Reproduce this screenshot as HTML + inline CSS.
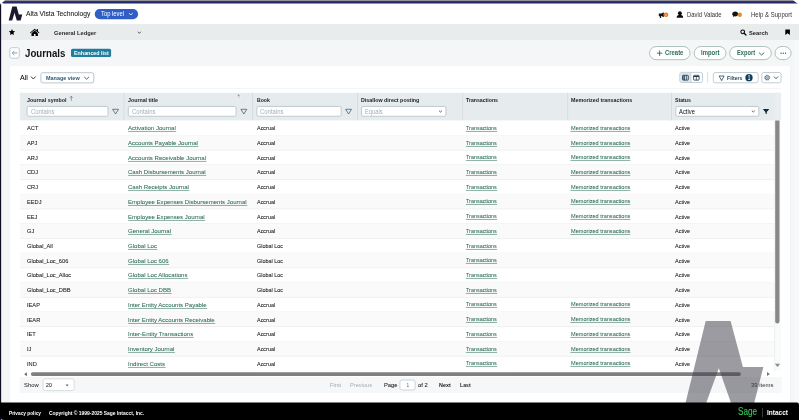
<!DOCTYPE html>
<html lang="en"><head><meta charset="utf-8"><title>Journals</title>
<style>
*{box-sizing:border-box;margin:0;padding:0}
html,body{width:799px;height:420px;overflow:hidden}
body{background:#fff;font-family:"Liberation Sans",sans-serif;color:#111;position:relative;font-size:6px}
#w{position:absolute;left:0;top:0;width:799px;height:420px;overflow:hidden;will-change:transform}
svg.layer{position:absolute;left:0;top:0}
.t{position:absolute;white-space:nowrap;line-height:1;transform-origin:0 0;display:block}
a.lnk{text-decoration:none;-webkit-text-stroke:0.05px #2a6b52}
.hv{-webkit-text-stroke:0.05px #111}
</style></head><body><div id="w">
<svg class="layer" width="799" height="420" viewBox="0 0 799 420">
<rect x="0" y="24" width="799" height="16.4" fill="#e9eced"/>
<rect x="1.15" y="40.4" width="793.35" height="362.1" fill="#f5f6f7"/>
<rect x="794.5" y="40.4" width="4.5" height="362" fill="#f8f9fa"/>
<defs><linearGradient id="tb" x1="0" y1="1.1" x2="0" y2="3.9" gradientUnits="userSpaceOnUse"><stop offset="0" stop-color="#15122c"/><stop offset="0.4" stop-color="#1a1f52"/><stop offset="0.72" stop-color="#2b4b9c"/><stop offset="1" stop-color="#2b4b9c" stop-opacity="0.15"/></linearGradient></defs>
<path d="M4.6 1.1H794L798 3.9H3.4L2.1 2.5Z" fill="url(#tb)"/>
<path d="M5.2 0H793L794.2 1.2H3.8Z" fill="#96939b"/>
<rect x="0" y="4.3" width="1.15" height="416" fill="#0f0e26"/>
<rect x="0" y="3.5" width="1.15" height="0.8" fill="#0f0e26" opacity="0.5"/>
<path d="M12.3 6.4H16.6L18.8 14.4H22.3L20.6 20.4H16.8L14.5 12.7L12.2 20.4H8.7Z" fill="#1c1b2b"/>
<rect x="94.7" y="9" width="43.4" height="10.2" rx="5.1" fill="#2f5fc6"/>
<path d="M129.3 13.4L130.8 15L132.3 13.4" fill="none" stroke="#fff" stroke-width="0.8" stroke-linecap="round" stroke-linejoin="round"/>
<path d="M658.8 13.4h2.4l2.6-1.2v5l-2.6-1.2h-0.3l0.4 1.9h-1.3l-0.5-1.9h-0.7z" fill="#141414"/><circle cx="666" cy="14.75" r="2.25" fill="#e2731f"/><rect x="665.55" y="13.4" width="0.8" height="2.7" rx="0.3" fill="#fde3c8"/>
<circle cx="679.9" cy="13.25" r="1.95" fill="#0c0c0c"/><path d="M676.75 17.8v-0.7c0-1.5 1.3-2 3.15-2s3.15 0.5 3.15 2v0.7z" fill="#0c0c0c"/>
<path d="M732.2 14c0-1.5 1.3-2.5 3-2.5s3 1 3 2.5-1.3 2.4-3 2.4c-0.3 0-0.6 0-0.9-0.1l-1.5 0.7 0.3-1.3c-0.6-0.4-0.9-1-0.9-1.7z" fill="#141414"/><circle cx="739.75" cy="14.75" r="2.2" fill="#e68a2b"/>
<g transform="translate(8.7,28.9) scale(0.27)"><path d="M12 0.5l3.5 7.5 8.2 1-6 5.7 1.5 8.1L12 18.8l-7.2 4 1.5-8.1-6-5.7 8.2-1z" fill="#000"/></g>
<g transform="translate(29.9,28.7) scale(0.48)"><path d="M10 0L0 8.2l1.2 1.5L10 2.6l8.8 7.1L20 8.2l-3.3-2.7V0.8h-2.4v2.7z" fill="#000"/><path d="M10 4L3.3 9.5V15h5v-4h3.4v4h5V9.5z" fill="#000"/></g>
<path d="M138.2 32L139.4 33.3L140.6 32" fill="none" stroke="#333" stroke-width="0.8" stroke-linecap="round" stroke-linejoin="round"/>
<g transform="translate(740.2,29.3) scale(0.5)"><circle cx="5" cy="5" r="3.7" fill="none" stroke="#000" stroke-width="2.1"/><path d="M7.8 7.8l3.8 3.6" stroke="#000" stroke-width="2.4" stroke-linecap="round"/></g>
<path d="M785.3 29.5h4.6v5.4l-2.3-1.6-2.3 1.6z" fill="#000"/>
<rect x="9.8" y="47.7" width="9.5" height="10.5" rx="2" fill="#fff" stroke="#b3bfc5" stroke-width="0.8"/>
<path d="M17.3 53H12.4M14.3 50.9L12.2 53l2.1 2.1" fill="none" stroke="#6b93ad" stroke-width="0.85"/>
<rect x="71" y="48.8" width="40.1" height="8.3" rx="1.6" fill="#1f7d9e"/>
<rect x="649.5" y="46.5" width="40.6" height="13.2" rx="7" fill="#fff" stroke="#9ab5a8" stroke-width="0.8"/>
<path d="M659.6 50.5v5.4M656.9 53.2h5.4" stroke="#2c6e52" stroke-width="0.9"/>
<rect x="694.2" y="46.5" width="31.8" height="13.2" rx="7" fill="#fff" stroke="#9ab5a8" stroke-width="0.8"/>
<rect x="729.7" y="46.5" width="41.6" height="13.2" rx="7" fill="#fff" stroke="#9ab5a8" stroke-width="0.8"/>
<path d="M759.3 52.9L761.6 55L763.9 52.9" fill="none" stroke="#2c6e52" stroke-width="0.95" stroke-linecap="round" stroke-linejoin="round"/>
<rect x="775" y="46.5" width="16.1" height="13.2" rx="7" fill="#fff" stroke="#9ab5a8" stroke-width="0.8"/>
<circle cx="781.1" cy="53.2" r="0.7" fill="#2c6e52"/>
<circle cx="783.3" cy="53.2" r="0.7" fill="#2c6e52"/>
<circle cx="785.5" cy="53.2" r="0.7" fill="#2c6e52"/>
<rect x="9.8" y="65.3" width="780.6" height="338" rx="3.5" fill="rgba(0,0,0,0.05)"/>
<rect x="10" y="65.5" width="780.2" height="338" rx="3" fill="#fff"/>
<path d="M31.2 76.8L33.3 79L35.4 76.8" fill="none" stroke="#222" stroke-width="0.9" stroke-linecap="round" stroke-linejoin="round"/>
<rect x="40.9" y="72.7" width="52.9" height="10.2" rx="2" fill="#fff" stroke="#a9b7be" stroke-width="0.8"/>
<path d="M84.5 77.2L86.6 79.2L88.7 77.2" fill="none" stroke="#333" stroke-width="0.8" stroke-linecap="round" stroke-linejoin="round"/>
<rect x="19.8" y="88.2" width="761" height="0.7" fill="#eef1f2"/>
<rect x="679.8" y="72.4" width="22.7" height="10.1" rx="1.8" fill="#fff" stroke="#b3c1c9" stroke-width="0.8"/>
<path d="M681.6 72.8H690.6V82.1H681.6Q680.2 82.1 680.2 80.7V74.2Q680.2 72.8 681.6 72.8Z" fill="#dbe5ec"/>
<rect x="690.6" y="72.5" width="0.7" height="10" fill="#b3c1c9"/>
<rect x="682.6" y="75.3" width="5.7" height="4.8" rx="0.6" fill="none" stroke="#1d3a4a" stroke-width="0.85"/><path d="M684.5 75.3v4.8M686.4 75.3v4.8" stroke="#1d3a4a" stroke-width="0.7"/><rect x="682.7" y="75.4" width="1.7" height="4.6" fill="#1d3a4a" opacity="0.55"/>
<rect x="693.6" y="75.3" width="5.5" height="4.8" rx="0.6" fill="none" stroke="#1d3a4a" stroke-width="0.85"/><path d="M693.6 76.5h5.5" stroke="#1d3a4a" stroke-width="1"/><path d="M696.35 76.5v3.6" stroke="#1d3a4a" stroke-width="0.7"/>
<rect x="707.4" y="72.1" width="0.7" height="10.5" fill="#c8d0d5"/>
<rect x="713.3" y="72.5" width="44.9" height="10.3" rx="2" fill="#fff" stroke="#b3c1c9" stroke-width="0.8"/>
<path d="M719.1 76h5L722.2 79.5V80.2H721V79.5Z" fill="none" stroke="#1d3a4a" stroke-width="0.75" stroke-linejoin="round"/>
<circle cx="749" cy="77.65" r="3.65" fill="#153e5c"/>
<rect x="761.8" y="72.5" width="19.3" height="10.3" rx="2" fill="#fff" stroke="#b3c1c9" stroke-width="0.8"/>
<g transform="translate(767.2,77.65)"><circle r="2.55" fill="none" stroke="#3a5666" stroke-width="0.6" stroke-dasharray="1.1 0.9"/><circle r="2.05" fill="none" stroke="#3a5666" stroke-width="0.7"/><circle r="0.85" fill="none" stroke="#3a5666" stroke-width="0.6"/></g>
<path d="M774.2 76.8L776 78.7L777.8 76.8" fill="none" stroke="#333" stroke-width="0.8" stroke-linecap="round" stroke-linejoin="round"/>
<rect x="19.8" y="92.8" width="761.3" height="27.6" fill="#e6ebee"/>
<rect x="774.8" y="92.8" width="6.3" height="27.6" fill="#eaeef0"/>
<rect x="123.5" y="92.8" width="0.8" height="27.6" fill="#d3dade"/>
<rect x="252.1" y="92.8" width="0.8" height="27.6" fill="#d3dade"/>
<rect x="357.2" y="92.8" width="0.8" height="27.6" fill="#d3dade"/>
<rect x="462.3" y="92.8" width="0.8" height="27.6" fill="#d3dade"/>
<rect x="567.3" y="92.8" width="0.8" height="27.6" fill="#d3dade"/>
<rect x="671.2" y="92.8" width="0.8" height="27.6" fill="#d3dade"/>
<path d="M71.3 100.8V96.3M69.9 97.8L71.3 96.3 72.7 97.8" fill="none" stroke="#3d6a84" stroke-width="0.6"/>
<rect x="27.1" y="106.45" width="80.9" height="9.8" rx="1.5" fill="#fff" stroke="#b2c0c7" stroke-width="0.8"/>
<rect x="128.3" y="106.45" width="107.8" height="9.8" rx="1.5" fill="#fff" stroke="#b2c0c7" stroke-width="0.8"/>
<rect x="256.9" y="106.45" width="84.2" height="9.8" rx="1.5" fill="#fff" stroke="#b2c0c7" stroke-width="0.8"/>
<rect x="361.5" y="106.45" width="84.4" height="9.8" rx="1.5" fill="#fff" stroke="#b2c0c7" stroke-width="0.8"/>
<rect x="675.8" y="106.45" width="83" height="9.8" rx="1.5" fill="#fff" stroke="#b2c0c7" stroke-width="0.8"/>
<path d="M439.3 110.9L440.5 112L441.7 110.9" fill="none" stroke="#333" stroke-width="0.75" stroke-linecap="round" stroke-linejoin="round"/>
<path d="M752.1 110.9L753.3 112L754.5 110.9" fill="none" stroke="#333" stroke-width="0.75" stroke-linecap="round" stroke-linejoin="round"/>
<path d="M112.6 109.3H118.5L115.55 114Z" fill="none" stroke="#1d4a63" stroke-width="0.65" stroke-linejoin="round"/>
<path d="M240.9 109.3H246.8L243.85 114Z" fill="none" stroke="#1d4a63" stroke-width="0.65" stroke-linejoin="round"/>
<path d="M345.6 109.3H351.5L348.55 114Z" fill="none" stroke="#1d4a63" stroke-width="0.65" stroke-linejoin="round"/>
<path d="M762.8 109.1H769.3L766.75 111.91V114.2L765.35 113.3V111.91Z" fill="#0d2b40"/>
<path d="M237.4 93.2v4.3l1.1-1 0.8 1.8 0.9-0.4-0.8-1.8h1.5z" fill="#8f989e" stroke="#fff" stroke-width="0.55" stroke-linejoin="round"/>
<rect x="19.8" y="135.01" width="754" height="0.7" fill="#e8ebed"/>
<rect x="128.1" y="130.95" width="48.15" height="0.65" fill="#4d8570"/>
<rect x="465.9" y="130.95" width="31.17" height="0.65" fill="#4d8570"/>
<rect x="570.4" y="130.95" width="59.95" height="0.65" fill="#4d8570"/>
<rect x="19.8" y="135.36" width="755" height="14.72" fill="#fafafa"/>
<rect x="19.8" y="149.73" width="754" height="0.7" fill="#e8ebed"/>
<rect x="128.1" y="145.95" width="70.36" height="0.65" fill="#4d8570"/>
<rect x="465.9" y="145.95" width="31.17" height="0.65" fill="#4d8570"/>
<rect x="570.4" y="145.95" width="59.95" height="0.65" fill="#4d8570"/>
<rect x="19.8" y="164.45" width="754" height="0.7" fill="#e8ebed"/>
<rect x="128.1" y="160.95" width="78.42" height="0.65" fill="#4d8570"/>
<rect x="465.9" y="159.95" width="31.17" height="0.65" fill="#4d8570"/>
<rect x="570.4" y="159.95" width="59.95" height="0.65" fill="#4d8570"/>
<rect x="19.8" y="164.8" width="755" height="14.72" fill="#fafafa"/>
<rect x="19.8" y="179.17" width="754" height="0.7" fill="#e8ebed"/>
<rect x="128.1" y="174.95" width="78.08" height="0.65" fill="#4d8570"/>
<rect x="465.9" y="174.95" width="31.17" height="0.65" fill="#4d8570"/>
<rect x="570.4" y="174.95" width="59.95" height="0.65" fill="#4d8570"/>
<rect x="19.8" y="193.89" width="754" height="0.7" fill="#e8ebed"/>
<rect x="128.1" y="189.95" width="61.27" height="0.65" fill="#4d8570"/>
<rect x="465.9" y="189.95" width="31.17" height="0.65" fill="#4d8570"/>
<rect x="570.4" y="189.95" width="59.95" height="0.65" fill="#4d8570"/>
<rect x="19.8" y="194.24" width="755" height="14.72" fill="#fafafa"/>
<rect x="19.8" y="208.61" width="754" height="0.7" fill="#e8ebed"/>
<rect x="128.1" y="204.95" width="119.11" height="0.65" fill="#4d8570"/>
<rect x="465.9" y="203.95" width="31.17" height="0.65" fill="#4d8570"/>
<rect x="570.4" y="203.95" width="59.95" height="0.65" fill="#4d8570"/>
<rect x="19.8" y="223.33" width="754" height="0.7" fill="#e8ebed"/>
<rect x="128.1" y="219.95" width="77.08" height="0.65" fill="#4d8570"/>
<rect x="465.9" y="218.95" width="31.17" height="0.65" fill="#4d8570"/>
<rect x="570.4" y="218.95" width="59.95" height="0.65" fill="#4d8570"/>
<rect x="19.8" y="223.68" width="755" height="14.72" fill="#fafafa"/>
<rect x="19.8" y="238.05" width="754" height="0.7" fill="#e8ebed"/>
<rect x="128.1" y="233.95" width="43.45" height="0.65" fill="#4d8570"/>
<rect x="465.9" y="233.95" width="31.17" height="0.65" fill="#4d8570"/>
<rect x="570.4" y="233.95" width="59.95" height="0.65" fill="#4d8570"/>
<rect x="19.8" y="252.77" width="754" height="0.7" fill="#e8ebed"/>
<rect x="128.1" y="248.95" width="29.33" height="0.65" fill="#4d8570"/>
<rect x="465.9" y="248.95" width="31.17" height="0.65" fill="#4d8570"/>
<rect x="19.8" y="253.12" width="755" height="14.72" fill="#fafafa"/>
<rect x="19.8" y="267.49" width="754" height="0.7" fill="#e8ebed"/>
<rect x="128.1" y="263.95" width="41.1" height="0.65" fill="#4d8570"/>
<rect x="465.9" y="262.95" width="31.17" height="0.65" fill="#4d8570"/>
<rect x="19.8" y="282.21" width="754" height="0.7" fill="#e8ebed"/>
<rect x="128.1" y="277.95" width="59.93" height="0.65" fill="#4d8570"/>
<rect x="465.9" y="277.95" width="31.17" height="0.65" fill="#4d8570"/>
<rect x="19.8" y="282.56" width="755" height="14.72" fill="#fafafa"/>
<rect x="19.8" y="296.93" width="754" height="0.7" fill="#e8ebed"/>
<rect x="128.1" y="292.95" width="43.45" height="0.65" fill="#4d8570"/>
<rect x="465.9" y="292.95" width="31.17" height="0.65" fill="#4d8570"/>
<rect x="19.8" y="311.65" width="754" height="0.7" fill="#e8ebed"/>
<rect x="128.1" y="307.95" width="79.09" height="0.65" fill="#4d8570"/>
<rect x="465.9" y="306.95" width="31.17" height="0.65" fill="#4d8570"/>
<rect x="570.4" y="306.95" width="59.95" height="0.65" fill="#4d8570"/>
<rect x="19.8" y="312" width="755" height="14.72" fill="#fafafa"/>
<rect x="19.8" y="326.37" width="754" height="0.7" fill="#e8ebed"/>
<rect x="128.1" y="322.95" width="87.16" height="0.65" fill="#4d8570"/>
<rect x="465.9" y="321.95" width="31.17" height="0.65" fill="#4d8570"/>
<rect x="570.4" y="321.95" width="59.95" height="0.65" fill="#4d8570"/>
<rect x="19.8" y="341.09" width="754" height="0.7" fill="#e8ebed"/>
<rect x="128.1" y="336.95" width="65.63" height="0.65" fill="#4d8570"/>
<rect x="465.9" y="336.95" width="31.17" height="0.65" fill="#4d8570"/>
<rect x="570.4" y="336.95" width="59.95" height="0.65" fill="#4d8570"/>
<rect x="19.8" y="341.44" width="755" height="14.72" fill="#fafafa"/>
<rect x="19.8" y="355.81" width="754" height="0.7" fill="#e8ebed"/>
<rect x="128.1" y="351.95" width="46.81" height="0.65" fill="#4d8570"/>
<rect x="465.9" y="351.95" width="31.17" height="0.65" fill="#4d8570"/>
<rect x="570.4" y="351.95" width="59.95" height="0.65" fill="#4d8570"/>
<rect x="128.1" y="366.95" width="37.38" height="0.65" fill="#4d8570"/>
<rect x="465.9" y="365.95" width="31.17" height="0.65" fill="#4d8570"/>
<rect x="570.4" y="365.95" width="59.95" height="0.65" fill="#4d8570"/>
<rect x="19.5" y="370.9" width="761.6" height="6.3" fill="#fff"/>
<rect x="19.5" y="377" width="762.2" height="15.9" fill="#f5f7f8"/>
<rect x="774.8" y="120.4" width="6.3" height="250.5" fill="#f9fafa"/>
<rect x="774.5" y="120.4" width="0.6" height="250.5" fill="#e4e8ea"/>
<path d="M775.2 120.4h4.3v201.1q0 2.1-2.15 2.1t-2.15-2.1z" fill="#888"/>
<path d="M774.9 363.7h5.2l-2.6 3.4z" fill="#8a8a8a"/>
<path d="M26.9 372.2v4.1l-2.7-2.05z" fill="#666"/>
<path d="M767 372.1v3.8l2.9-1.9z" fill="#777"/>
<rect x="30.9" y="372.2" width="710" height="3.7" rx="1.85" fill="#7f7f7f"/>
<rect x="43" y="378.9" width="31.2" height="11.7" rx="2" fill="#fff" stroke="#cfd6da" stroke-width="0.8"/>
<path d="M65.6 384.6h3l-1.5 1.8z" fill="#666"/>
<rect x="399.9" y="380" width="15.2" height="10" rx="2" fill="#fff" stroke="#c0cad0" stroke-width="0.8"/>
</svg>
<div class="t hv" style="left:25.9px;top:10px;font-size:7.2px;color:#151515;transform:scaleX(0.939);">Alta Vista Technology</div>
<div class="t" style="left:101.3px;top:11px;font-size:6.3px;color:#fff;transform:scaleX(0.929);">Top level</div>
<div class="t" style="left:686.9px;top:12px;font-size:6.3px;color:#333;transform:scaleX(0.935);">David Valade</div>
<div class="t" style="left:750.7px;top:12px;font-size:6.4px;color:#333;transform:scaleX(0.942);">Help &amp; Support</div>
<div class="t" style="left:53.9px;top:30px;font-size:6.2px;color:#2a2a2a;font-weight:bold;transform:scaleX(0.928);">General Ledger</div>
<div class="t" style="left:748.8px;top:30px;font-size:6.2px;color:#222;font-weight:bold;transform:scaleX(0.924);">Search</div>
<div class="t" style="left:25.3px;top:48px;font-size:10.9px;color:#151515;font-weight:bold;transform:scaleX(0.889);">Journals</div>
<div class="t" style="left:73.6px;top:51px;font-size:5.8px;color:#fff;font-weight:bold;transform:scaleX(0.925);">Enhanced list</div>
<div class="t" style="left:664.9px;top:50px;font-size:6.4px;color:#2c6e52;font-weight:bold;transform:scaleX(0.924);">Create</div>
<div class="t" style="left:700.7px;top:50px;font-size:6.4px;color:#2c6e52;font-weight:bold;transform:scaleX(0.929);">Import</div>
<div class="t" style="left:736.9px;top:50px;font-size:6.4px;color:#2c6e52;font-weight:bold;transform:scaleX(0.893);">Export</div>
<div class="t hv" style="left:19.96px;top:74px;font-size:7.4px;color:#000;transform:scaleX(0.954);">All</div>
<div class="t" style="left:46.2px;top:76px;font-size:5.9px;color:#2f5873;font-weight:bold;transform:scaleX(0.926);">Manage view</div>
<div class="t" style="left:727px;top:76px;font-size:5.8px;color:#2c4a60;font-weight:bold;transform:scaleX(0.885);">Filters</div>
<div class="t" style="left:747.9px;top:75px;font-size:6.3px;color:#fff;font-weight:bold;transform:scaleX(0.6);">1</div>
<div class="t" style="left:26.7px;top:98px;font-size:5.8px;color:#1d1d1d;font-weight:bold;transform:scaleX(0.919);">Journal symbol</div>
<div class="t" style="left:127.9px;top:98px;font-size:5.8px;color:#1d1d1d;font-weight:bold;transform:scaleX(0.911);">Journal title</div>
<div class="t" style="left:256.5px;top:98px;font-size:5.8px;color:#1d1d1d;font-weight:bold;transform:scaleX(0.889);">Book</div>
<div class="t" style="left:361.1px;top:98px;font-size:5.8px;color:#1d1d1d;font-weight:bold;transform:scaleX(0.92);">Disallow direct posting</div>
<div class="t" style="left:466.1px;top:98px;font-size:5.8px;color:#1d1d1d;font-weight:bold;transform:scaleX(0.894);">Transactions</div>
<div class="t" style="left:570.9px;top:98px;font-size:5.8px;color:#1d1d1d;font-weight:bold;transform:scaleX(0.923);">Memorized transactions</div>
<div class="t" style="left:675.3px;top:98px;font-size:5.8px;color:#1d1d1d;font-weight:bold;transform:scaleX(0.897);">Status</div>
<div class="t" style="left:30.5px;top:109px;font-size:6.3px;color:#a5afb5;transform:scaleX(0.945);">Contains</div>
<div class="t" style="left:131.7px;top:109px;font-size:6.3px;color:#a5afb5;transform:scaleX(0.945);">Contains</div>
<div class="t" style="left:260.3px;top:109px;font-size:6.3px;color:#a5afb5;transform:scaleX(0.945);">Contains</div>
<div class="t" style="left:365px;top:109px;font-size:6.3px;color:#a5afb5;transform:scaleX(0.914);">Equals</div>
<div class="t" style="left:679.2px;top:109px;font-size:6.4px;color:#151515;transform:scaleX(0.918);">Active</div>
<div class="t hv" style="left:26.9px;top:125px;font-size:6.04px;color:#111;transform:scaleX(0.94);">ACT</div>
<a class="t lnk" style="left:128.3px;top:125px;font-size:6px;color:#2a6b52;transform:scaleX(1.008);">Activation Journal</a>
<div class="t hv" style="left:256.5px;top:126px;font-size:5.8px;color:#111;transform:scaleX(0.94);">Accrual</div>
<a class="t lnk" style="left:466.1px;top:126px;font-size:5.58px;color:#2a6b52;transform:scaleX(0.97);">Transactions</a>
<a class="t lnk" style="left:570.6px;top:126px;font-size:5.78px;color:#2a6b52;transform:scaleX(0.97);">Memorized transactions</a>
<div class="t hv" style="left:675.4px;top:126px;font-size:5.86px;color:#111;transform:scaleX(0.94);">Active</div>
<div class="t hv" style="left:26.9px;top:140px;font-size:6.04px;color:#111;transform:scaleX(0.94);">APJ</div>
<a class="t lnk" style="left:128.3px;top:140px;font-size:6px;color:#2a6b52;transform:scaleX(1.008);">Accounts Payable Journal</a>
<div class="t hv" style="left:256.5px;top:141px;font-size:5.8px;color:#111;transform:scaleX(0.94);">Accrual</div>
<a class="t lnk" style="left:466.1px;top:141px;font-size:5.58px;color:#2a6b52;transform:scaleX(0.97);">Transactions</a>
<a class="t lnk" style="left:570.6px;top:141px;font-size:5.78px;color:#2a6b52;transform:scaleX(0.97);">Memorized transactions</a>
<div class="t hv" style="left:675.4px;top:141px;font-size:5.86px;color:#111;transform:scaleX(0.94);">Active</div>
<div class="t hv" style="left:26.9px;top:155px;font-size:6.04px;color:#111;transform:scaleX(0.94);">ARJ</div>
<a class="t lnk" style="left:128.3px;top:155px;font-size:6px;color:#2a6b52;transform:scaleX(1.008);">Accounts Receivable Journal</a>
<div class="t hv" style="left:256.5px;top:156px;font-size:5.8px;color:#111;transform:scaleX(0.94);">Accrual</div>
<a class="t lnk" style="left:466.1px;top:155px;font-size:5.58px;color:#2a6b52;transform:scaleX(0.97);">Transactions</a>
<a class="t lnk" style="left:570.6px;top:155px;font-size:5.78px;color:#2a6b52;transform:scaleX(0.97);">Memorized transactions</a>
<div class="t hv" style="left:675.4px;top:156px;font-size:5.86px;color:#111;transform:scaleX(0.94);">Active</div>
<div class="t hv" style="left:26.9px;top:169px;font-size:6.04px;color:#111;transform:scaleX(0.94);">CDJ</div>
<a class="t lnk" style="left:128.3px;top:169px;font-size:6px;color:#2a6b52;transform:scaleX(1.008);">Cash Disbursements Journal</a>
<div class="t hv" style="left:256.5px;top:170px;font-size:5.8px;color:#111;transform:scaleX(0.94);">Accrual</div>
<a class="t lnk" style="left:466.1px;top:170px;font-size:5.58px;color:#2a6b52;transform:scaleX(0.97);">Transactions</a>
<a class="t lnk" style="left:570.6px;top:170px;font-size:5.78px;color:#2a6b52;transform:scaleX(0.97);">Memorized transactions</a>
<div class="t hv" style="left:675.4px;top:170px;font-size:5.86px;color:#111;transform:scaleX(0.94);">Active</div>
<div class="t hv" style="left:26.9px;top:184px;font-size:6.04px;color:#111;transform:scaleX(0.94);">CRJ</div>
<a class="t lnk" style="left:128.3px;top:184px;font-size:6px;color:#2a6b52;transform:scaleX(1.008);">Cash Receipts Journal</a>
<div class="t hv" style="left:256.5px;top:185px;font-size:5.8px;color:#111;transform:scaleX(0.94);">Accrual</div>
<a class="t lnk" style="left:466.1px;top:185px;font-size:5.58px;color:#2a6b52;transform:scaleX(0.97);">Transactions</a>
<a class="t lnk" style="left:570.6px;top:185px;font-size:5.78px;color:#2a6b52;transform:scaleX(0.97);">Memorized transactions</a>
<div class="t hv" style="left:675.4px;top:185px;font-size:5.86px;color:#111;transform:scaleX(0.94);">Active</div>
<div class="t hv" style="left:26.9px;top:199px;font-size:6.04px;color:#111;transform:scaleX(0.94);">EEDJ</div>
<a class="t lnk" style="left:128.3px;top:199px;font-size:6px;color:#2a6b52;transform:scaleX(1.008);">Employee Expenses Disbursements Journal</a>
<div class="t hv" style="left:256.5px;top:200px;font-size:5.8px;color:#111;transform:scaleX(0.94);">Accrual</div>
<a class="t lnk" style="left:466.1px;top:199px;font-size:5.58px;color:#2a6b52;transform:scaleX(0.97);">Transactions</a>
<a class="t lnk" style="left:570.6px;top:199px;font-size:5.78px;color:#2a6b52;transform:scaleX(0.97);">Memorized transactions</a>
<div class="t hv" style="left:675.4px;top:200px;font-size:5.86px;color:#111;transform:scaleX(0.94);">Active</div>
<div class="t hv" style="left:26.9px;top:214px;font-size:6.04px;color:#111;transform:scaleX(0.94);">EEJ</div>
<a class="t lnk" style="left:128.3px;top:214px;font-size:6px;color:#2a6b52;transform:scaleX(1.008);">Employee Expenses Journal</a>
<div class="t hv" style="left:256.5px;top:215px;font-size:5.8px;color:#111;transform:scaleX(0.94);">Accrual</div>
<a class="t lnk" style="left:466.1px;top:214px;font-size:5.58px;color:#2a6b52;transform:scaleX(0.97);">Transactions</a>
<a class="t lnk" style="left:570.6px;top:214px;font-size:5.78px;color:#2a6b52;transform:scaleX(0.97);">Memorized transactions</a>
<div class="t hv" style="left:675.4px;top:215px;font-size:5.86px;color:#111;transform:scaleX(0.94);">Active</div>
<div class="t hv" style="left:26.9px;top:228px;font-size:6.04px;color:#111;transform:scaleX(0.94);">GJ</div>
<a class="t lnk" style="left:128.3px;top:228px;font-size:6px;color:#2a6b52;transform:scaleX(1.008);">General Journal</a>
<div class="t hv" style="left:256.5px;top:229px;font-size:5.8px;color:#111;transform:scaleX(0.94);">Accrual</div>
<a class="t lnk" style="left:466.1px;top:229px;font-size:5.58px;color:#2a6b52;transform:scaleX(0.97);">Transactions</a>
<a class="t lnk" style="left:570.6px;top:229px;font-size:5.78px;color:#2a6b52;transform:scaleX(0.97);">Memorized transactions</a>
<div class="t hv" style="left:675.4px;top:229px;font-size:5.86px;color:#111;transform:scaleX(0.94);">Active</div>
<div class="t hv" style="left:26.9px;top:243px;font-size:6.04px;color:#111;transform:scaleX(0.94);">Global_All</div>
<a class="t lnk" style="left:128.3px;top:243px;font-size:6px;color:#2a6b52;transform:scaleX(1.008);">Global Loc</a>
<div class="t hv" style="left:256.5px;top:244px;font-size:5.8px;color:#111;transform:scaleX(0.94);">Global Loc</div>
<a class="t lnk" style="left:466.1px;top:244px;font-size:5.58px;color:#2a6b52;transform:scaleX(0.97);">Transactions</a>
<div class="t hv" style="left:675.4px;top:244px;font-size:5.86px;color:#111;transform:scaleX(0.94);">Active</div>
<div class="t hv" style="left:26.9px;top:258px;font-size:6.04px;color:#111;transform:scaleX(0.94);">Global_Loc_606</div>
<a class="t lnk" style="left:128.3px;top:258px;font-size:6px;color:#2a6b52;transform:scaleX(1.008);">Global Loc 606</a>
<div class="t hv" style="left:256.5px;top:259px;font-size:5.8px;color:#111;transform:scaleX(0.94);">Global Loc</div>
<a class="t lnk" style="left:466.1px;top:258px;font-size:5.58px;color:#2a6b52;transform:scaleX(0.97);">Transactions</a>
<div class="t hv" style="left:675.4px;top:259px;font-size:5.86px;color:#111;transform:scaleX(0.94);">Active</div>
<div class="t hv" style="left:26.9px;top:272px;font-size:6.04px;color:#111;transform:scaleX(0.94);">Global_Loc_Alloc</div>
<a class="t lnk" style="left:128.3px;top:272px;font-size:6px;color:#2a6b52;transform:scaleX(1.008);">Global Loc Allocations</a>
<div class="t hv" style="left:256.5px;top:273px;font-size:5.8px;color:#111;transform:scaleX(0.94);">Global Loc</div>
<a class="t lnk" style="left:466.1px;top:273px;font-size:5.58px;color:#2a6b52;transform:scaleX(0.97);">Transactions</a>
<div class="t hv" style="left:675.4px;top:273px;font-size:5.86px;color:#111;transform:scaleX(0.94);">Active</div>
<div class="t hv" style="left:26.9px;top:287px;font-size:6.04px;color:#111;transform:scaleX(0.94);">Global_Loc_DBB</div>
<a class="t lnk" style="left:128.3px;top:287px;font-size:6px;color:#2a6b52;transform:scaleX(1.008);">Global Loc DBB</a>
<div class="t hv" style="left:256.5px;top:288px;font-size:5.8px;color:#111;transform:scaleX(0.94);">Global Loc</div>
<a class="t lnk" style="left:466.1px;top:288px;font-size:5.58px;color:#2a6b52;transform:scaleX(0.97);">Transactions</a>
<div class="t hv" style="left:675.4px;top:288px;font-size:5.86px;color:#111;transform:scaleX(0.94);">Active</div>
<div class="t hv" style="left:26.9px;top:302px;font-size:6.04px;color:#111;transform:scaleX(0.94);">IEAP</div>
<a class="t lnk" style="left:128.3px;top:302px;font-size:6px;color:#2a6b52;transform:scaleX(1.008);">Inter Entity Accounts Payable</a>
<div class="t hv" style="left:256.5px;top:303px;font-size:5.8px;color:#111;transform:scaleX(0.94);">Accrual</div>
<a class="t lnk" style="left:466.1px;top:302px;font-size:5.58px;color:#2a6b52;transform:scaleX(0.97);">Transactions</a>
<a class="t lnk" style="left:570.6px;top:302px;font-size:5.78px;color:#2a6b52;transform:scaleX(0.97);">Memorized transactions</a>
<div class="t hv" style="left:675.4px;top:303px;font-size:5.86px;color:#111;transform:scaleX(0.94);">Active</div>
<div class="t hv" style="left:26.9px;top:317px;font-size:6.04px;color:#111;transform:scaleX(0.94);">IEAR</div>
<a class="t lnk" style="left:128.3px;top:317px;font-size:6px;color:#2a6b52;transform:scaleX(1.008);">Inter Entity Accounts Receivable</a>
<div class="t hv" style="left:256.5px;top:318px;font-size:5.8px;color:#111;transform:scaleX(0.94);">Accrual</div>
<a class="t lnk" style="left:466.1px;top:317px;font-size:5.58px;color:#2a6b52;transform:scaleX(0.97);">Transactions</a>
<a class="t lnk" style="left:570.6px;top:317px;font-size:5.78px;color:#2a6b52;transform:scaleX(0.97);">Memorized transactions</a>
<div class="t hv" style="left:675.4px;top:318px;font-size:5.86px;color:#111;transform:scaleX(0.94);">Active</div>
<div class="t hv" style="left:26.9px;top:331px;font-size:6.04px;color:#111;transform:scaleX(0.94);">IET</div>
<a class="t lnk" style="left:128.3px;top:331px;font-size:6px;color:#2a6b52;transform:scaleX(1.008);">Inter-Entity Transactions</a>
<div class="t hv" style="left:256.5px;top:332px;font-size:5.8px;color:#111;transform:scaleX(0.94);">Accrual</div>
<a class="t lnk" style="left:466.1px;top:332px;font-size:5.58px;color:#2a6b52;transform:scaleX(0.97);">Transactions</a>
<a class="t lnk" style="left:570.6px;top:332px;font-size:5.78px;color:#2a6b52;transform:scaleX(0.97);">Memorized transactions</a>
<div class="t hv" style="left:675.4px;top:332px;font-size:5.86px;color:#111;transform:scaleX(0.94);">Active</div>
<div class="t hv" style="left:26.9px;top:346px;font-size:6.04px;color:#111;transform:scaleX(0.94);">IJ</div>
<a class="t lnk" style="left:128.3px;top:346px;font-size:6px;color:#2a6b52;transform:scaleX(1.008);">Inventory Journal</a>
<div class="t hv" style="left:256.5px;top:347px;font-size:5.8px;color:#111;transform:scaleX(0.94);">Accrual</div>
<a class="t lnk" style="left:466.1px;top:347px;font-size:5.58px;color:#2a6b52;transform:scaleX(0.97);">Transactions</a>
<a class="t lnk" style="left:570.6px;top:347px;font-size:5.78px;color:#2a6b52;transform:scaleX(0.97);">Memorized transactions</a>
<div class="t hv" style="left:675.4px;top:347px;font-size:5.86px;color:#111;transform:scaleX(0.94);">Active</div>
<div class="t hv" style="left:26.9px;top:361px;font-size:6.04px;color:#111;transform:scaleX(0.94);">IND</div>
<a class="t lnk" style="left:128.3px;top:361px;font-size:6px;color:#2a6b52;transform:scaleX(1.008);">Indirect Costs</a>
<div class="t hv" style="left:256.5px;top:362px;font-size:5.8px;color:#111;transform:scaleX(0.94);">Accrual</div>
<a class="t lnk" style="left:466.1px;top:361px;font-size:5.58px;color:#2a6b52;transform:scaleX(0.97);">Transactions</a>
<a class="t lnk" style="left:570.6px;top:361px;font-size:5.78px;color:#2a6b52;transform:scaleX(0.97);">Memorized transactions</a>
<div class="t hv" style="left:675.4px;top:362px;font-size:5.86px;color:#111;transform:scaleX(0.94);">Active</div>
<div class="t" style="left:23.5px;top:382px;font-size:6px;color:#151515;transform:scaleX(0.978);">Show</div>
<div class="t hv" style="left:46px;top:382px;font-size:6px;color:#151515;transform:scaleX(0.862);">20</div>
<div class="t" style="left:330.4px;top:382px;font-size:6px;color:#a4adb2;transform:scaleX(0.96);">First</div>
<div class="t" style="left:350.4px;top:382px;font-size:6px;color:#a4adb2;transform:scaleX(0.947);">Previous</div>
<div class="t hv" style="left:384.1px;top:382px;font-size:6px;color:#151515;transform:scaleX(0.956);">Page</div>
<div class="t" style="left:406.5px;top:383px;font-size:5.8px;color:#151515;transform:scaleX(0.558);">1</div>
<div class="t hv" style="left:417.7px;top:382px;font-size:6px;color:#151515;transform:scaleX(0.979);">of 2</div>
<div class="t" style="left:439.1px;top:383px;font-size:5.8px;color:#1d1d1d;font-weight:bold;transform:scaleX(0.93);">Next</div>
<div class="t" style="left:459.6px;top:383px;font-size:5.8px;color:#1d1d1d;font-weight:bold;transform:scaleX(0.889);">Last</div>
<div class="t" style="left:751.3px;top:382px;font-size:6px;color:#333;transform:scaleX(0.992);">39 items</div>

<svg class="layer" width="799" height="420" viewBox="0 0 799 420">
<path d="M705.7 321H730.6L742.9 367.1H763.4L754.2 403H731L718.8 368.2L706.2 403H685.5Z" fill="rgba(60,58,70,0.51)"/>
<path d="M0 402.6H797Q799 402.6 799 404.6V420H4Q0 420 0 416Z" fill="#000"/>
<rect x="762" y="407.9" width="0.7" height="9.2" fill="#555"/>
</svg>
<div class="t" style="left:9px;top:411px;font-size:5.5px;color:#fff;font-weight:bold;transform:scaleX(0.865);">Privacy policy</div>
<div class="t" style="left:49.1px;top:411px;font-size:5.5px;color:#fff;font-weight:bold;transform:scaleX(0.899);">Copyright © 1999-2025 Sage Intacct, Inc.</div>
<div class="t" style="left:738.2px;top:407px;font-size:10px;color:#33c659;transform:scaleX(0.814);-webkit-text-stroke:0.15px #33c659;">Sage</div>
<div class="t" style="left:766.9px;top:410px;font-size:6.3px;color:#fff;font-weight:bold;transform:scaleX(1.034);">Intacct</div>

</div></body></html>
